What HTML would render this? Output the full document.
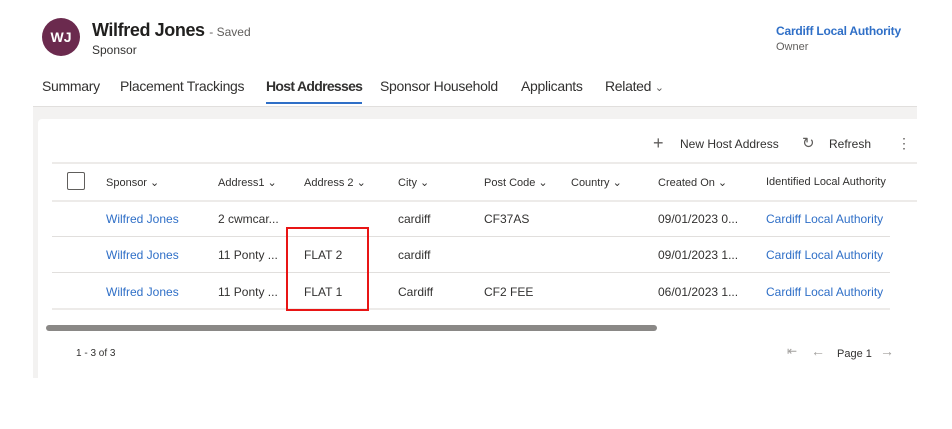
<!DOCTYPE html>
<html><head><meta charset="utf-8"><style>
*{margin:0;padding:0;box-sizing:border-box}
body{width:952px;height:429px;background:#fff;font-family:"Liberation Sans",sans-serif;position:relative;overflow:hidden;color:#323130}
.a{position:absolute;white-space:nowrap}
.av{left:42px;top:18px;width:38px;height:38px;border-radius:50%;background:#6b2a4e;color:#fff;font-weight:bold;font-size:14px;text-align:center;line-height:38px}
.tab{top:78px;font-size:14px;color:#323130;letter-spacing:-0.3px}
.h{top:176px;font-size:11px;color:#323130}
.c{font-size:12px;color:#323130}
.l{font-size:12px;color:#2f6fc7}
.ln{position:absolute;left:52px;height:2px;background:#edebe9}
</style></head><body>
<div class="a av">WJ</div>
<div class="a" style="left:92px;top:20px;font-size:18px;font-weight:bold;color:#201f1e;letter-spacing:-0.4px">Wilfred Jones <span style="font-size:12px;font-weight:normal;color:#605e5c;letter-spacing:0">- Saved</span></div>
<div class="a" style="left:92px;top:43px;font-size:12px;color:#323130">Sponsor</div>
<div class="a" style="left:776px;top:24px;font-size:12px;font-weight:bold;color:#2f6fc7;letter-spacing:-0.2px">Cardiff Local Authority</div>
<div class="a" style="left:776px;top:41px;font-size:11px;color:#605e5c">Owner</div>
<div class="a tab" style="left:42px">Summary</div>
<div class="a tab" style="left:120px">Placement Trackings</div>
<div class="a tab" style="left:266px;font-weight:bold;letter-spacing:-0.7px">Host Addresses</div>
<div class="a" style="left:266px;top:102px;width:96px;height:2px;background:#2f6fc7"></div>
<div class="a tab" style="left:380px">Sponsor Household</div>
<div class="a tab" style="left:521px">Applicants</div>
<div class="a tab" style="left:605px">Related <span style="font-size:11px;color:#605e5c">&#8964;</span></div>
<div class="a" style="left:33px;top:106px;width:884px;height:272px;background:#f3f2f1;border-top:1px solid #e1dfdd"></div>
<div class="a" style="left:38px;top:119px;width:879px;height:259px;background:#fff;border-radius:4px 0 0 0"></div>
<div class="a" style="left:653px;top:133px;font-size:18px;color:#605e5c;font-weight:lighter">+</div>
<div class="a c" style="left:680px;top:137px">New Host Address</div>
<div class="a" style="left:802px;top:134px;font-size:15px;color:#605e5c">&#8635;</div>
<div class="a c" style="left:829px;top:137px">Refresh</div>
<div class="a" style="left:897px;top:135px;font-size:14px;color:#605e5c">&#8942;</div>
<div class="ln" style="top:162px;width:865px"></div>
<div class="a" style="left:67px;top:172px;width:18px;height:18px;border:1px solid #605e5c;border-radius:2px"></div>
<div class="a h" style="left:106px">Sponsor &#8964;</div>
<div class="a h" style="left:218px">Address1 &#8964;</div>
<div class="a h" style="left:304px">Address 2 &#8964;</div>
<div class="a h" style="left:398px">City &#8964;</div>
<div class="a h" style="left:484px">Post Code &#8964;</div>
<div class="a h" style="left:571px">Country &#8964;</div>
<div class="a h" style="left:658px">Created On &#8964;</div>
<div class="a h" style="left:766px">Identified Local Authority</div>
<div class="ln" style="top:200px;width:865px"></div>
<div class="a l" style="left:106px;top:212px">Wilfred Jones</div><div class="a c" style="left:218px;top:212px">2 cwmcar...</div><div class="a c" style="left:398px;top:212px">cardiff</div><div class="a c" style="left:484px;top:212px">CF37AS</div><div class="a c" style="left:658px;top:212px">09/01/2023 0...</div><div class="a l" style="left:766px;top:212px">Cardiff Local Authority</div>
<div class="ln" style="top:236px;width:838px;height:1px;background:#e1dfdd"></div>
<div class="a l" style="left:106px;top:248px">Wilfred Jones</div><div class="a c" style="left:218px;top:248px">11 Ponty ...</div><div class="a c" style="left:304px;top:248px">FLAT 2</div><div class="a c" style="left:398px;top:248px">cardiff</div><div class="a c" style="left:658px;top:248px">09/01/2023 1...</div><div class="a l" style="left:766px;top:248px">Cardiff Local Authority</div>
<div class="ln" style="top:272px;width:838px;height:1px;background:#e1dfdd"></div>
<div class="a l" style="left:106px;top:285px">Wilfred Jones</div><div class="a c" style="left:218px;top:285px">11 Ponty ...</div><div class="a c" style="left:304px;top:285px">FLAT 1</div><div class="a c" style="left:398px;top:285px">Cardiff</div><div class="a c" style="left:484px;top:285px">CF2 FEE</div><div class="a c" style="left:658px;top:285px">06/01/2023 1...</div><div class="a l" style="left:766px;top:285px">Cardiff Local Authority</div>
<div class="ln" style="top:308px;width:838px"></div>
<div class="a" style="left:286px;top:227px;width:83px;height:84px;border:2px solid #e81515"></div>
<div class="a" style="left:46px;top:325px;width:611px;height:6px;border-radius:3px;background:#8a8886"></div>
<div class="a" style="left:76px;top:348px;font-size:10px;color:#323130">1 - 3 of 3</div>
<div class="a" style="left:787px;top:344px;font-size:12px;color:#a19f9d">&#8676;</div>
<div class="a" style="left:811px;top:343px;font-size:14px;color:#a19f9d">&#8592;</div>
<div class="a" style="left:837px;top:348px;font-size:11px;color:#323130">Page 1</div>
<div class="a" style="left:880px;top:343px;font-size:14px;color:#a19f9d">&#8594;</div>
</body></html>
